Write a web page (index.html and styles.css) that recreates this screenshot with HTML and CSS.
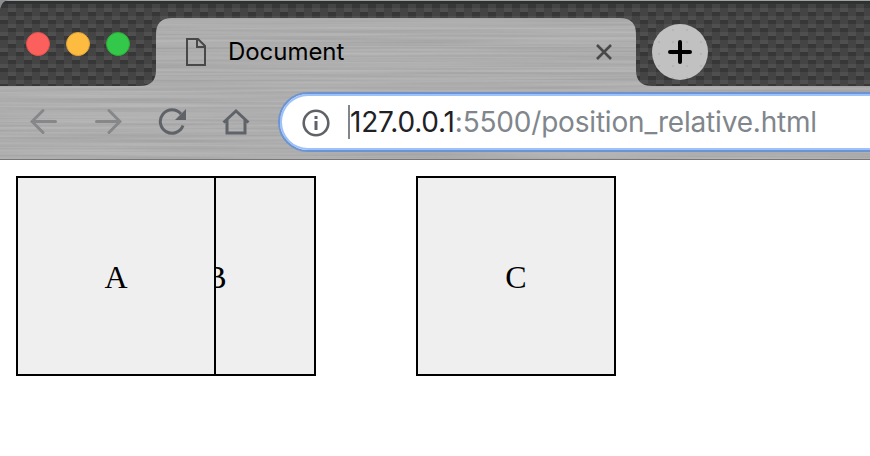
FILE: index.html
```html
<!DOCTYPE html>
<html lang="en">
<head>
<meta charset="utf-8">
<title>Document</title>
<link rel="stylesheet" href="styles.css">
</head>
<body>
<header class="browser">
  <svg class="texture" width="870" height="160" aria-hidden="true">
    <defs>
      <pattern id="weave" width="16" height="16" patternUnits="userSpaceOnUse">
        <rect width="16" height="16" fill="#444"/>
        <rect width="8" height="4" fill="#4f4f4f"/>
        <rect y="4" width="8" height="4" fill="#373737"/>
        <rect x="8" y="8" width="8" height="4" fill="#4f4f4f"/>
        <rect x="8" y="12" width="8" height="4" fill="#373737"/>
      </pattern>
      <filter id="brushed" x="0" y="0" width="100%" height="100%" color-interpolation-filters="sRGB">
        <feTurbulence type="fractalNoise" baseFrequency="0.004 0.4" numOctaves="2" seed="8"/>
        <feColorMatrix values=".13 0 0 0 .615  .13 0 0 0 .615  .13 0 0 0 .615  0 0 0 0 1"/>
        <feComposite in2="SourceGraphic" operator="in"/>
      </filter>
    </defs>
    <rect width="870" height="86" fill="url(#weave)"/>
    <path d="M0 .5H870" stroke="#a0a3a3"/>
    <path d="M0 1.5H870" stroke="#2c2f2f"/>
    <path d="M0 3H870" stroke="#303232" stroke-width="2"/>
    <path d="M0 0H8Q2 1 0 9Z" fill="#8b8e8e"/>
    <path filter="url(#brushed)" d="M0 86H140Q156 86 156 70V34Q156 18 172 18H620Q636 18 636 34V70Q636 86 652 86H870V160H0Z"/>
    <path d="M0 159.5H870" stroke="#777"/>
  </svg>
  <div class="tabs">
    <div class="lights"><i class="red"></i><i class="yellow"></i><i class="green"></i></div>
    <div class="tab">
      <svg class="page-icon" width="20" height="28" viewBox="0 0 20 28"><path d="M1 1H12L19 8V27H1ZM11 1V9H19" fill="none" stroke="#484848" stroke-width="2"/></svg>
      <span class="title">Document</span>
      <svg class="close" width="18" height="18" viewBox="0 0 18 18"><path d="M2 2 16 16M16 2 2 16" stroke="#484848" stroke-width="2.6"/></svg>
    </div>
    <div class="new-tab"><svg width="24" height="24" viewBox="0 0 24 24"><path d="M2 12H22M12 2V22" stroke="#000" stroke-width="4" stroke-linecap="round"/></svg></div>
  </div>
  <div class="toolbar">
    <svg class="nav back" width="28" height="28" viewBox="0 0 28 28"><path d="M13 2.5 2 13.5 13 24.5M2 13.5H25.5" /></svg>
    <svg class="nav forward" width="28" height="28" viewBox="0 0 28 28"><path d="M15 2.5 26 13.5 15 24.5M26 13.5H2.5" /></svg>
    <svg class="reload" width="28" height="28" viewBox="0 0 28 28"><path d="M23 6A11.7 11.7 0 1 0 25 17.5" fill="none" stroke="#5f6368" stroke-width="3"/><path d="M28 1V12H17Z" fill="#5f6368"/></svg>
    <svg class="home" width="28" height="28" viewBox="0 0 28 28"><path d="M1.5 14.5 14 3 26.5 14.5M5 12V25H23V12" fill="none" stroke="#5f6368" stroke-width="3"/></svg>
    <div class="address">
      <svg class="info" width="28" height="28" viewBox="0 0 28 28"><circle cx="14" cy="14" r="12.3" fill="none" stroke="#5f6368" stroke-width="2.6"/><path d="M14 7V10M14 12V21" stroke="#5f6368" stroke-width="3"/></svg>
      <span class="caret"></span>
      <span class="url"><span class="host">127.0.0.1</span><span class="path">:5500/position_relative.html</span></span>
    </div>
  </div>
</header>
<main class="page">
  <div class="box a">A</div><div class="box b">B</div><div class="box c">C</div>
</main>
</body>
</html>
```

FILE: styles.css
```css
* { box-sizing: border-box; }
body { margin: 0; height: 456px; background: #fff; overflow: hidden; }
svg { display: block; flex: none; }
.browser { position: relative; height: 160px; overflow: hidden; font-family: Inter, "Liberation Sans", sans-serif; }
.texture { position: absolute; inset: 0; }
.tabs { position: relative; display: flex; height: 86px; }
.lights { display: flex; gap: 16px; width: 156px; padding: 32px 0 0 26px; }
.lights i { width: 24px; height: 24px; border-radius: 50%; }
.red { background: #fc605c; border: 1px solid #e5524d; }
.yellow { background: #fdbc40; border: 1px solid #e2a336; }
.green { background: #34c84a; border: 1px solid #2bad35; }
.tab { display: flex; align-items: center; width: 480px; height: 68px; margin-top: 18px; padding: 0 23px 0 30px; }
.title { margin-left: 22px; font-size: 24px; line-height: 30px; letter-spacing: -.05px; color: #000; }
.close { margin-left: auto; }
.new-tab { display: grid; place-items: center; width: 56px; height: 56px; margin: 24px 0 0 16px; border-radius: 50%; background: radial-gradient(circle, #b5b5b5 1px, transparent 1.5px) 0 0 / 14px 12px, #c1c1c1; }
.toolbar { position: relative; display: flex; align-items: center; height: 74px; padding: 0 0 2px 30px; }
.nav { fill: none; stroke: #858789; stroke-width: 3; stroke-linecap: round; }
.forward { margin-left: 36px; }
.reload { margin-left: 36px; }
.home { margin-left: 36px; }
.address { display: flex; align-items: center; width: 640px; height: 60px; margin-left: 28px; padding-left: 22px; flex: none; border: 2px solid #6d94d2; border-radius: 30px; background: #fff; box-shadow: inset 0 0 0 2px #9dc2fa; }
.info { position: relative; top: 1px; }
.caret { width: 2px; height: 34px; margin-left: 18px; background: #80868b; }
.url { font-size: 28px; line-height: 34px; letter-spacing: -.19px; white-space: nowrap; }
.host { color: #202124; }
.path { color: #80868b; }
.page { display: flex; padding: 16px; font: 32px/36px "Liberation Serif", serif; color: #000; }
.box { display: grid; place-items: center; flex: none; width: 200px; height: 200px; padding-top: 2px; border: 2px solid #000; background: #efefef; }
.a { z-index: 1; }
.b { margin-left: -100px; }
.c { margin-left: 100px; }
```
